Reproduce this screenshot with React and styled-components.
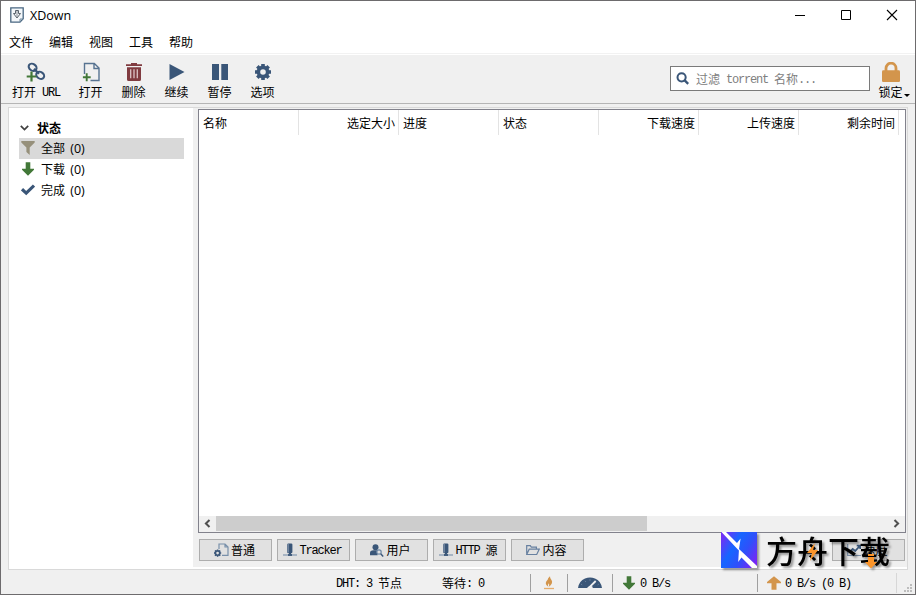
import React from "react";
import styled, { createGlobalStyle } from "styled-components";

const navy = "#3a5678";
const green = "#427838";
const orange = "#d3954c";

const Global = createGlobalStyle`
  * { box-sizing: border-box; }
  body { margin: 0; overflow: hidden; }
  svg { display: block; flex: none; }
`;

const Window = styled.div`
  position: relative;
  width: 916px;
  height: 595px;
  border: 1px solid #6d6b6d;
  background: #f0f0f0;
  display: flex;
  flex-direction: column;
  font: 12px/16px "Noto Sans CJK SC", sans-serif;
  color: #000;
  white-space: pre;
  cursor: default;
`;
const TitleBar = styled.header`
  height: 29px;
  background: #fff;
  display: flex;
  align-items: center;
  padding: 0 17px 1px 9px;
`;
const Title = styled.span`
  font: 12.5px/16px "Open Sans", sans-serif;
  margin-left: 6px;
  flex: 1;
  padding-top: 1px;
`;
const WindowControls = styled.div`
  display: flex;
  gap: 34px;
`;
const MenuBar = styled.nav`
  height: 24px;
  background: #fff;
  display: flex;
  gap: 16px;
  padding: 4px 0 0 8px;
  border-bottom: 1px solid #f2f2f2;
`;
const Toolbar = styled.div`
  height: 50px;
  border-top: 1px solid #fff;
  border-bottom: 1px solid #b5b5b5;
  display: flex;
  padding-left: 5px;
`;
const Tool = styled.div`
  width: ${(p) => p.$w}px;
  margin-right: ${(p) => p.$gap || 0}px;
  display: flex;
  flex-direction: column;
  align-items: center;
  padding-top: 7px;
`;
const ToolLabel = styled.span`
  display: flex;
  margin-top: 2px;
  height: 16px;
`;
const Latin = styled.span`
  font: 12px/16px "Liberation Mono", monospace;
  letter-spacing: -1.2px;
  padding-top: 1px;
`;
const SearchBox = styled.div`
  width: 200px;
  height: 25px;
  margin: 11px 4px 0 auto;
  border: 1px solid #7a7a7a;
  background: #fff;
  display: flex;
  align-items: center;
  color: #808080;
  padding-left: 5px;
  gap: 7px;
`;
const SearchText = styled.span`
  display: flex;
  padding-top: 1px;
`;
const Caret = styled.i`
  border: 3px solid transparent;
  border-top-color: #000;
  border-bottom: 0;
  margin: 10px -6px 0 1px;
  width: 6px;
  height: 3px;
`;
const Body = styled.main`
  height: 463px;
  margin: 3px 7px 0 7px;
  border: 1px solid #d9d9d9;
  display: flex;
  background: #f0f0f0;
`;
const Sidebar = styled.aside`
  width: 184px;
  background: #fff;
  padding: 9px 9px 0 10px;
`;
const GroupTitle = styled.div`
  height: 21px;
  display: flex;
  align-items: center;
  font-weight: 700;
  gap: 8px;
  padding: 0 0 0 1px;
`;
const FilterRow = styled.div`
  height: 21px;
  display: flex;
  align-items: center;
  gap: 6px;
  padding: 0 0 1px 2px;
  background: ${(p) => (p.$active ? "#d9d9d9" : "transparent")};
`;
const Count = styled.span`
  font: 12.5px/16px "Open Sans", sans-serif;
  margin-left: -4px;
  padding-top: 1px;
`;
const Content = styled.section`
  flex: 1;
  padding: 1px 0 0 5px;
  border-bottom: 2px solid #fff;
`;
const Table = styled.div`
  width: 708px;
  height: 424px;
  border: 1px solid #82828c;
  background: #fff;
  display: flex;
  flex-direction: column;
`;
const HeaderRow = styled.div`
  display: grid;
  grid-template-columns: repeat(7, 100px);
  height: 25px;
`;
const HeaderCell = styled.div`
  border-right: 1px solid #e3e3e3;
  padding: 5px 3px 0 4px;
  text-align: ${(p) => (p.$right ? "right" : "left")};
`;
const Rows = styled.div`
  flex: 1;
`;
const ScrollBar = styled.div`
  height: 16px;
  background: #f0f0f0;
  display: grid;
  grid-template-columns: 17px 431px 1fr 17px;
  align-items: center;
  justify-items: center;
  padding-bottom: 1px;
`;
const Thumb = styled.div`
  background: #cdcdcd;
  width: 100%;
  height: 15px;
`;
const TabRow = styled.div`
  display: flex;
  gap: 5px;
  padding: 6px 1px 0 1px;
  width: 708px;
`;
const TabButton = styled.div`
  width: 73px;
  height: 22px;
  border: 1px solid #adadad;
  background: #e1e1e1;
  display: flex;
  align-items: center;
  justify-content: center;
  gap: 2px;
  padding-right: 2px;
  margin-left: ${(p) => (p.$end ? "auto" : "0")};
`;
const StatusBar = styled.footer`
  flex: 1;
  display: flex;
  align-items: center;
  padding-top: 2px;
`;
const StatusCell = styled.div`
  width: ${(p) => p.$w}px;
  height: 18px;
  padding-left: ${(p) => p.$pad || 0}px;
  display: flex;
  align-items: center;
  gap: 4px;
  border-left: ${(p) => (p.$line ? "1px solid #a0a0a0" : "0")};
  flex: none;
`;
const StatusLabel = styled.span`
  display: flex;
`;
const GripCell = styled.div`
  flex: 1;
  height: 20px;
  border-left: 1px solid #d7d7d7;
  display: flex;
  justify-content: flex-end;
  align-items: flex-end;
  padding-right: 2px;
`;
const Watermark = styled.div`
  position: absolute;
  left: 720px;
  top: 531px;
  width: 172px;
  height: 40px;
  display: flex;
  filter: drop-shadow(2px 2px 1px rgba(0, 0, 0, 0.4));
`;
const WatermarkText = styled.span`
  font: 500 31px/38px "Noto Sans CJK SC", sans-serif;
  margin: -1px 0 0 9px;
  width: 126px;
`;
const Sparks = styled.svg`
  position: absolute;
  left: 0;
  top: 0;
`;

const AppIcon = () => (
  <svg width="14" height="16" viewBox="0 0 14 16" fill="none">
    <path d="M.8.8h12.4v11L10 15.2H.8z" fill="#f3f7fa" stroke="#486681" strokeWidth="1.3" />
    <path d="M10 15v-3h3" stroke="#718ba0" />
    <path d="M5.5 3.5h3v3h2L7 11 3.5 6.5h2z" stroke="#59636c" />
    <path d="M7 4v6" stroke="#8a9198" />
  </svg>
);
const LinkAdd = () => (
  <svg width="20" height="20" viewBox="0 0 20 20" fill="none">
    <ellipse cx="6.6" cy="5.3" rx="4.2" ry="3.3" transform="rotate(35 6.6 5.3)" stroke={navy} strokeWidth="2.1" />
    <ellipse cx="14.2" cy="13.3" rx="4.2" ry="3.3" transform="rotate(35 14.2 13.3)" stroke={navy} strokeWidth="2.1" />
    <path d="M8 6.8l5 5" stroke={navy} strokeWidth="2.3" />
    <path d="M5.5 9.5v10M.7 14.5h9.6" stroke={green} strokeWidth="2.2" />
  </svg>
);
const FileAdd = () => (
  <svg width="18" height="20" viewBox="0 0 18 20" fill="none">
    <path d="M2.5 12V1.5h9.8L17 6v12.5H8.5M12 1.5v5h5" stroke="#577391" strokeWidth="1.4" />
    <path d="M4.7 11.3v8M.9 15.2h7.8" stroke={green} strokeWidth="1.9" />
  </svg>
);
const Trash = () => (
  <svg width="16" height="20" viewBox="0 0 16 20">
    <path d="M0 2.2h5V1h6v1.2h5v1.7H0zM1 5.2h14v12.3q0 1.5-1.5 1.5h-11Q1 19 1 17.5z" fill="#803b40" />
    <path d="M4.7 7.2v9M8 7.2v9M11.3 7.2v9" stroke="#dbc4c5" strokeWidth="1.3" />
  </svg>
);
const Play = () => (
  <svg width="16" height="20" viewBox="0 0 16 20"><path d="M.5 2v16L15.5 10z" fill={navy} /></svg>
);
const Pause = () => (
  <svg width="16" height="20" viewBox="0 0 16 20"><path d="M0 2h7v16H0zM9.3 2H16v16H9.3z" fill={navy} /></svg>
);
const teeth = [0, 45, 90, 135];
const Gear = () => (
  <svg width="20" height="20" viewBox="0 0 20 20">
    {teeth.map((a) => (
      <path key={a} d="M8.2 2h3.6v4H8.2zM8.2 14h3.6v4H8.2z" fill={navy} transform={`rotate(${a} 10 10)`} />
    ))}
    <circle cx="10" cy="10" r="4.6" fill="none" stroke={navy} strokeWidth="3.6" />
  </svg>
);
const Lock = () => (
  <svg width="18" height="20" viewBox="0 0 18 20">
    <path d="M4 9V6.2a5 5 0 0 1 10 0V9" fill="none" stroke={orange} strokeWidth="2.8" />
    <rect y="8.3" width="18" height="11.7" rx="1.3" fill={orange} />
  </svg>
);
const SearchIcon = () => (
  <svg width="13" height="13" viewBox="0 0 13 13" fill="none" stroke={navy}>
    <circle cx="5.6" cy="5.3" r="4.1" strokeWidth="2" />
    <path d="M8.7 8.4l3.5 3.5" strokeWidth="2.4" />
  </svg>
);
const Chevron = () => (
  <svg width="9" height="6" viewBox="0 0 9 6"><path d="M.8.8l3.7 3.7L8.2.8" fill="none" stroke="#404040" strokeWidth="1.7" /></svg>
);
const Funnel = () => (
  <svg width="14" height="14" viewBox="0 0 14 14"><path d="M.3 0h13.4v1.4L8.7 6.5V14L5.4 11V6.5L.3 1.4z" fill="#96907b" /></svg>
);
const ArrowDown = () => (
  <svg width="14" height="14" viewBox="0 0 14 14"><path d="M4.7.2h4.6v6.5H13v1.1L7 13.8 1 7.8V6.7h3.7z" fill={green} /></svg>
);
const ArrowUp = () => (
  <svg width="14" height="14" viewBox="0 0 14 14"><path d="M4.5 13.8h5V7.3H14V6L7 .2 0 6v1.3h4.5z" fill={orange} /></svg>
);
const Check = () => (
  <svg width="14" height="14" viewBox="0 0 14 14"><path d="M1 6.2l4.2 4L13 2.5" fill="none" stroke={navy} strokeWidth="3.1" /></svg>
);
const ScrollArrow = ({ right }) => (
  <svg width="7" height="9" viewBox="0 0 7 9">
    <path d={right ? "M1.5 1l3.6 3.5L1.5 8" : "M5.5 1L1.9 4.5 5.5 8"} fill="none" stroke="#505050" strokeWidth="2" />
  </svg>
);
const FileGear = () => (
  <svg width="15" height="14" viewBox="0 0 15 14" fill="none">
    <path d="M5 6V1h6l3 3v8.3H8M11 1v3h3" stroke="#7890aa" strokeWidth="1.2" />
    <circle cx="3.6" cy="10.1" r="2.2" stroke={navy} strokeWidth="1.7" />
    <path d="M3.6 6.5v1M3.6 12.7v1M0 10.1h1M6.2 10.1h1M1 7.5l.8.8M5.4 11.9l.8.8M1 12.7l.8-.8M5.4 8.3l.8-.8" stroke={navy} strokeWidth="1.5" />
  </svg>
);
const Server = () => (
  <svg width="14" height="14" viewBox="0 0 14 14">
    <rect x="4.2" y=".5" width="5.2" height="9.8" rx="1.2" fill={navy} />
    <path d="M5.2 1v8.5" stroke="#8799ae" />
    <path d="M6 10h2v2H6z" fill={navy} />
    <path d="M0 12h14" stroke="#8fa1b6" strokeWidth="1.4" />
    <path d="M5 12h4" stroke={navy} strokeWidth="1.8" />
  </svg>
);
const UserSearch = () => (
  <svg width="14" height="14" viewBox="0 0 14 14">
    <circle cx="5.5" cy="4.2" r="3" fill={navy} />
    <path d="M0 12.3V10q0-2.8 3.6-2.8h4v5.1z" fill={navy} />
    <circle cx="9" cy="9" r="2.2" fill="#e1e1e1" stroke="#6e88a5" strokeWidth="1.2" />
    <path d="M10.7 10.7l2.5 2.8" stroke={navy} strokeWidth="1.4" />
  </svg>
);
const Folder = () => (
  <svg width="14" height="12" viewBox="0 0 14 12" fill="none" stroke="#6780a0" strokeWidth="1.2">
    <path d="M.7 9.8V1.7h3.6l1 1.4h5.1v2M.7 10.5L3.2 5.2h10L10.7 10.5z" />
  </svg>
);
const Chart = () => (
  <svg width="14" height="13" viewBox="0 0 14 13" fill="none">
    <path d="M.7 0v11.5H14" stroke="#7c91aa" strokeWidth="1.2" />
    <path d="M2.7 8l3-3 2.5 2 4.5-5M9.7 1.6h3.5V5" stroke={navy} strokeWidth="1.8" />
  </svg>
);
const Flame = () => (
  <svg width="12" height="14" viewBox="0 0 12 14">
    <path d="M7 .3Q6.8 2.6 8.6 4.3 10.5 7.5 5.6 11 6.8 8.6 5.8 7.2 4.6 8.4 5 10.6 1.6 8 3.4 5.2 5 3.8 5.2 2.2 6 1.4 7 .3z" fill={orange} />
    <path d="M1 12.5h10" stroke="#e5ad6e" strokeWidth="1.3" />
  </svg>
);
const Gauge = () => (
  <svg width="24" height="12" viewBox="0 0 24 12">
    <path d="M0 11Q1 4 7 1.5 12-.5 17 1.5 23 4 24 11H15Q12 7 9 11z" fill={navy} />
    <path d="M11.5 10.2L17.7 4M12 11q1.5 0 2-1.5" fill="none" stroke="#f0f0f0" strokeWidth="1.8" />
    <path d="M3.2 7.2l1 .7M7 3.8l.8 1M12 2.3v1.3M20.7 7.2l-1 .7" stroke="#7388a2" />
  </svg>
);
const Grip = () => (
  <svg width="9" height="9" viewBox="0 0 9 9" fill="#bdbdbd">
    <path d="M6 0h2v2H6zM3 3h2v2H3zM6 3h2v2H6zM0 6h2v2H0zM3 6h2v2H3zM6 6h2v2H6z" />
  </svg>
);
const ArkLogo = () => (
  <svg width="36" height="36" viewBox="0 0 36 36">
    <defs>
      <linearGradient id="ark" x1="0" y1=".2" x2="1" y2=".8">
        <stop offset="0" stopColor="#7130f5" />
        <stop offset=".35" stopColor="#1666ff" />
        <stop offset=".65" stopColor="#2f50fa" />
        <stop offset="1" stopColor="#7a25f5" />
      </linearGradient>
    </defs>
    <path d="M0 0h36v36H0z" fill="url(#ark)" />
    <path d="M.5 0H5l11 11 3.6-4.5L17.8 18.5z" fill="#fff" />
    <path d="M18 17l18 17v2h-5L20.5 25.5 17.2 30z" fill="#fff" />
  </svg>
);

const tools = [
  { label: "打开", icon: <FileAdd /> },
  { label: "删除", icon: <Trash /> },
  { label: "继续", icon: <Play /> },
  { label: "暂停", icon: <Pause /> },
  { label: "选项", icon: <Gear /> },
];
const columns = ["名称", "选定大小", "进度", "状态", "下载速度", "上传速度", "剩余时间"];
const rightAligned = new Set([1, 4, 5, 6]);

export default function App() {
  return (
    <Window>
      <Global />
      <TitleBar>
        <AppIcon />
        <Title>XDown</Title>
        <WindowControls>
          <svg width="12" height="12"><path d="M1 6.5h10" stroke="#000" /></svg>
          <svg width="12" height="12"><path d="M1.5 1.5h9v9h-9z" fill="none" stroke="#000" /></svg>
          <svg width="12" height="12"><path d="M1 1l10 10M11 1L1 11" stroke="#000" strokeWidth="1.1" /></svg>
        </WindowControls>
      </TitleBar>
      <MenuBar>
        {["文件", "编辑", "视图", "工具", "帮助"].map((m) => <span key={m}>{m}</span>)}
      </MenuBar>
      <Toolbar>
        <Tool $w={60} $gap={3}>
          <LinkAdd />
          <ToolLabel>打开<Latin> URL</Latin></ToolLabel>
        </Tool>
        {tools.map((t, i) => (
          <Tool key={i} $w={43}>
            {t.icon}
            <ToolLabel>{t.label}</ToolLabel>
          </Tool>
        ))}
        <SearchBox>
          <SearchIcon />
          <SearchText>过滤<Latin> torrent </Latin>名称<Latin>...</Latin></SearchText>
        </SearchBox>
        <Tool $w={34} $gap={7}>
          <Lock />
          <ToolLabel>锁定<Caret /></ToolLabel>
        </Tool>
      </Toolbar>
      <Body>
        <Sidebar>
          <GroupTitle><Chevron />状态</GroupTitle>
          <FilterRow $active><Funnel />全部<Count> (0)</Count></FilterRow>
          <FilterRow><ArrowDown />下载<Count> (0)</Count></FilterRow>
          <FilterRow><Check />完成<Count> (0)</Count></FilterRow>
        </Sidebar>
        <Content>
          <Table>
            <HeaderRow>
              {columns.map((c, i) => <HeaderCell key={c} $right={rightAligned.has(i)}>{c}</HeaderCell>)}
            </HeaderRow>
            <Rows />
            <ScrollBar><ScrollArrow /><Thumb /><span /><ScrollArrow right /></ScrollBar>
          </Table>
          <TabRow>
            <TabButton><FileGear />普通</TabButton>
            <TabButton><Server /><Latin>Tracker</Latin></TabButton>
            <TabButton><UserSearch />用户</TabButton>
            <TabButton><Server /><StatusLabel><Latin>HTTP </Latin>源</StatusLabel></TabButton>
            <TabButton><Folder />内容</TabButton>
            <TabButton $end><Chart />速度</TabButton>
          </TabRow>
        </Content>
      </Body>
      <StatusBar>
        <StatusCell $w={441} $pad={335}><StatusLabel><Latin>DHT: 3 </Latin>节点</StatusLabel></StatusCell>
        <StatusCell $w={88}><StatusLabel>等待<Latin>: 0</Latin></StatusLabel></StatusCell>
        <StatusCell $w={37} $pad={12} $line><Flame /></StatusCell>
        <StatusCell $w={45} $pad={10} $line><Gauge /></StatusCell>
        <StatusCell $w={145} $pad={9} $line><ArrowDown /><Latin>0 B/s</Latin></StatusCell>
        <StatusCell $w={139} $pad={9} $line><ArrowUp /><Latin>0 B/s (0 B)</Latin></StatusCell>
        <GripCell><Grip /></GripCell>
      </StatusBar>
      <Watermark>
        <ArkLogo />
        <WatermarkText>方舟下载</WatermarkText>
        <Sparks width="172" height="40" viewBox="0 0 172 40" fill="#fa942a">
          <path d="M94 11l-8 10h5l-2 8 8-11h-5z" />
          <path d="M147 22h6v2h-6zM147 25h6v5h3l-6 6.5-6-6.5h3z" />
        </Sparks>
      </Watermark>
    </Window>
  );
}
